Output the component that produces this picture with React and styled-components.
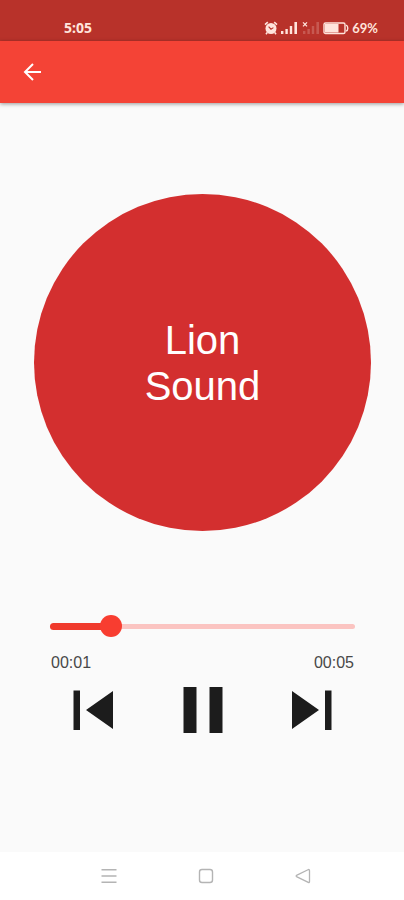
import { useState } from "react";
import styled, { createGlobalStyle } from "styled-components";

const GlobalStyle = createGlobalStyle`
  * {
    box-sizing: border-box;
  }

  body {
    margin: 0;
    background: #fafafa;
    font-family: "Liberation Sans", Arial, sans-serif;
  }

  button {
    display: flex;
    justify-content: center;
    align-items: center;
    padding: 0;
    border: none;
    background: none;
    cursor: pointer;
  }
`;

const Screen = styled.div`
  display: flex;
  flex-direction: column;
  min-height: 100vh;
`;

const StatusBar = styled.div`
  display: flex;
  justify-content: space-between;
  align-items: flex-end;
  height: 41px;
  padding: 0 26px 4px 64px;
  background: #b8322a;
  color: #ffe4dc;
  font-family: Lato, sans-serif;
  font-size: 13px;
  line-height: 18px;
`;

const Clock = styled.span`
  font-family: "Noto Sans", sans-serif;
  font-size: 14px;
  font-weight: 700;
`;

const StatusIcons = styled.div`
  display: flex;
  align-items: center;
  gap: 3px;
`;

const Battery = styled.span`
  font-weight: 700;
`;

const AppBar = styled.header`
  display: flex;
  align-items: center;
  height: 62px;
  padding: 0 20px;
  background: #f44336;
  box-shadow: 0 1px 4px rgba(0, 0, 0, 0.4);
`;

const BackButton = styled.button`
  width: 24px;
  height: 24px;
`;

const Player = styled.main`
  display: flex;
  flex: 1;
  flex-direction: column;
  padding: 91px 33px 0 34px;
`;

const Disc = styled.div`
  display: flex;
  justify-content: center;
  align-items: center;
  width: 100%;
  aspect-ratio: 1;
  border-radius: 50%;
  background: #d32f2f;
`;

const Title = styled.h1`
  width: min-content;
  margin: 0;
  color: #fff;
  font-size: 40px;
  font-weight: 400;
  line-height: 46px;
  text-align: center;
`;

const Slider = styled.div`
  display: grid;
  align-items: center;
  margin-top: 83px;
  padding: 0 16px;
`;

const Rail = styled.div`
  grid-area: 1 / 1;
  height: 5px;
  border-radius: 3px;
  background: #fbc4c1;
`;

const Progress = styled.div`
  grid-area: 1 / 1;
  height: 7px;
  border-radius: 4px;
  background: #f03a2c;
`;

/* wider than the rail by one thumb, so the thumb centre reaches both ends */
const Seek = styled.input`
  grid-area: 1 / 1;
  width: calc(100% + 22px);
  height: 24px;
  margin: 0 -11px;
  appearance: none;
  background: transparent;
  cursor: pointer;

  &::-webkit-slider-thumb {
    appearance: none;
    width: 22px;
    height: 22px;
    border-radius: 50%;
    background: #f83d30;
  }
`;

const Times = styled.div`
  display: flex;
  justify-content: space-between;
  margin-top: 16px;
  padding: 0 17px;
  color: #484848;
  font-size: 16px;
  line-height: 18px;
`;

const Controls = styled.div`
  display: flex;
  justify-content: space-between;
  align-items: center;
  margin-top: 10px;
  padding: 0 36px;
`;

const ControlButton = styled.button`
  width: ${({ $wide }) => ($wide ? "44px" : "46px")};
  height: 56px;
  color: #1c1c1c;
`;

const NavBar = styled.nav`
  display: flex;
  justify-content: center;
  align-items: center;
  gap: 73px;
  height: 48px;
  padding-left: 8px;
  background: #fff;
`;

const NavButton = styled.button`
  width: 24px;
  height: 24px;
  color: #b4b4b4;
`;

const AlarmIcon = () => (
  <svg width="14" height="14" viewBox="0 0 14 14" fill="none" stroke="currentColor">
    <circle cx="7" cy="7.5" r="5.5" fill="currentColor" stroke="none" />
    <path d="M1 3.6 3.8 1.2M10.2 1.2 13 3.6M3.2 11.6 2 13.2M10.8 11.6 12 13.2" strokeWidth="1.6" />
    <path d="M4.6 5.6 7 8.2 9.4 6.6" stroke="#b8322a" strokeWidth="1.1" />
  </svg>
);

const SignalIcon = () => (
  <svg width="18" height="14" viewBox="0 0 18 14" fill="currentColor">
    <rect x="0" y="10" width="2.4" height="3" />
    <rect x="4.4" y="8" width="2.4" height="5" />
    <rect x="8.8" y="5" width="2.4" height="8" />
    <rect x="13.4" y="1" width="2.6" height="12" />
  </svg>
);

const NoSignalIcon = () => (
  <svg width="18" height="14" viewBox="0 0 18 14" fill="currentColor">
    <g opacity="0.22">
      <rect x="1" y="10" width="2.4" height="3" />
      <rect x="5.4" y="8" width="2.4" height="5" />
      <rect x="9.8" y="5" width="2.4" height="8" />
      <rect x="14.4" y="1" width="2.6" height="12" />
    </g>
    <path d="M1 1.4 5 5.4M5 1.4 1 5.4" stroke="currentColor" strokeWidth="1.3" />
  </svg>
);

const BatteryIcon = () => (
  <svg width="26" height="14" viewBox="0 0 26 14" fill="none">
    <rect x="1" y="2" width="21" height="10.5" rx="1.6" stroke="currentColor" strokeWidth="1.4" />
    <rect x="2" y="3" width="13.5" height="8.5" fill="currentColor" />
    <path d="M23 4.2q1.8 .6 1.8 3t-1.8 3" stroke="currentColor" strokeWidth="1.4" />
  </svg>
);

const ArrowIcon = () => (
  <svg width="24" height="24" viewBox="0 0 24 24" fill="none" stroke="#fff" strokeWidth="2">
    <path d="M21 12H5M13 4l-8 8 8 8" />
  </svg>
);

const PreviousIcon = () => (
  <svg width="46" height="46" viewBox="0 0 46 46" fill="currentColor">
    <path d="M3.5 3.5H10V43H3.5zM43 4v38L16 23z" />
  </svg>
);

const NextIcon = () => (
  <svg width="46" height="46" viewBox="0 0 46 46" fill="currentColor">
    <path d="M36 3.5h6.5V43H36zM3 4v38l27-19z" />
  </svg>
);

const PauseIcon = () => (
  <svg width="44" height="46" viewBox="0 0 44 46" fill="currentColor">
    <path d="M2.5 0h13v46h-13zM28.5 0h13v46h-13z" />
  </svg>
);

const PlayIcon = () => (
  <svg width="44" height="46" viewBox="0 0 44 46" fill="currentColor">
    <path d="M6 0v46l36-23z" />
  </svg>
);

const formatTime = (seconds) => `00:${String(seconds).padStart(2, "0")}`;

const App = () => {
  const duration = 5;
  const [position, setPosition] = useState(1);
  const [playing, setPlaying] = useState(true);

  return (
    <Screen>
      <GlobalStyle />
      <StatusBar>
        <Clock>5:05</Clock>
        <StatusIcons>
          <AlarmIcon />
          <SignalIcon />
          <NoSignalIcon />
          <BatteryIcon />
          <Battery>69%</Battery>
        </StatusIcons>
      </StatusBar>
      <AppBar>
        <BackButton aria-label="Back">
          <ArrowIcon />
        </BackButton>
      </AppBar>
      <Player>
        <Disc>
          <Title>Lion Sound</Title>
        </Disc>
        <Slider>
          <Rail />
          <Progress style={{ width: `${(position / duration) * 100}%` }} />
          <Seek
            type="range"
            aria-label="Position"
            min="0"
            max={duration}
            value={position}
            onChange={(e) => setPosition(Number(e.target.value))}
          />
        </Slider>
        <Times>
          <span>{formatTime(position)}</span>
          <span>{formatTime(duration)}</span>
        </Times>
        <Controls>
          <ControlButton aria-label="Previous" onClick={() => setPosition(0)}>
            <PreviousIcon />
          </ControlButton>
          <ControlButton
            $wide
            aria-label={playing ? "Pause" : "Play"}
            onClick={() => setPlaying(!playing)}
          >
            {playing ? <PauseIcon /> : <PlayIcon />}
          </ControlButton>
          <ControlButton aria-label="Next" onClick={() => setPosition(duration)}>
            <NextIcon />
          </ControlButton>
        </Controls>
      </Player>
      <NavBar>
        <NavButton aria-label="Recent apps">
          <svg width="24" height="24" viewBox="0 0 24 24" stroke="currentColor" strokeWidth="1.4">
            <path d="M4.5 5.7h15M4.5 12h15M4.5 18.3h15" />
          </svg>
        </NavButton>
        <NavButton aria-label="Home">
          <svg width="24" height="24" viewBox="0 0 24 24" fill="none" stroke="currentColor" strokeWidth="1.4">
            <rect x="5.5" y="5.5" width="13" height="13" rx="2.5" />
          </svg>
        </NavButton>
        <NavButton aria-label="Go back">
          <svg width="24" height="24" viewBox="0 0 24 24" fill="none" stroke="currentColor" strokeWidth="1.3" strokeLinejoin="round">
            <path d="M17.5 5.5q1 0 1 1v11q0 1.4-1.2 .8L5.5 12.6q-.8-.6 0-1.2z" />
          </svg>
        </NavButton>
      </NavBar>
    </Screen>
  );
};

export default App;
